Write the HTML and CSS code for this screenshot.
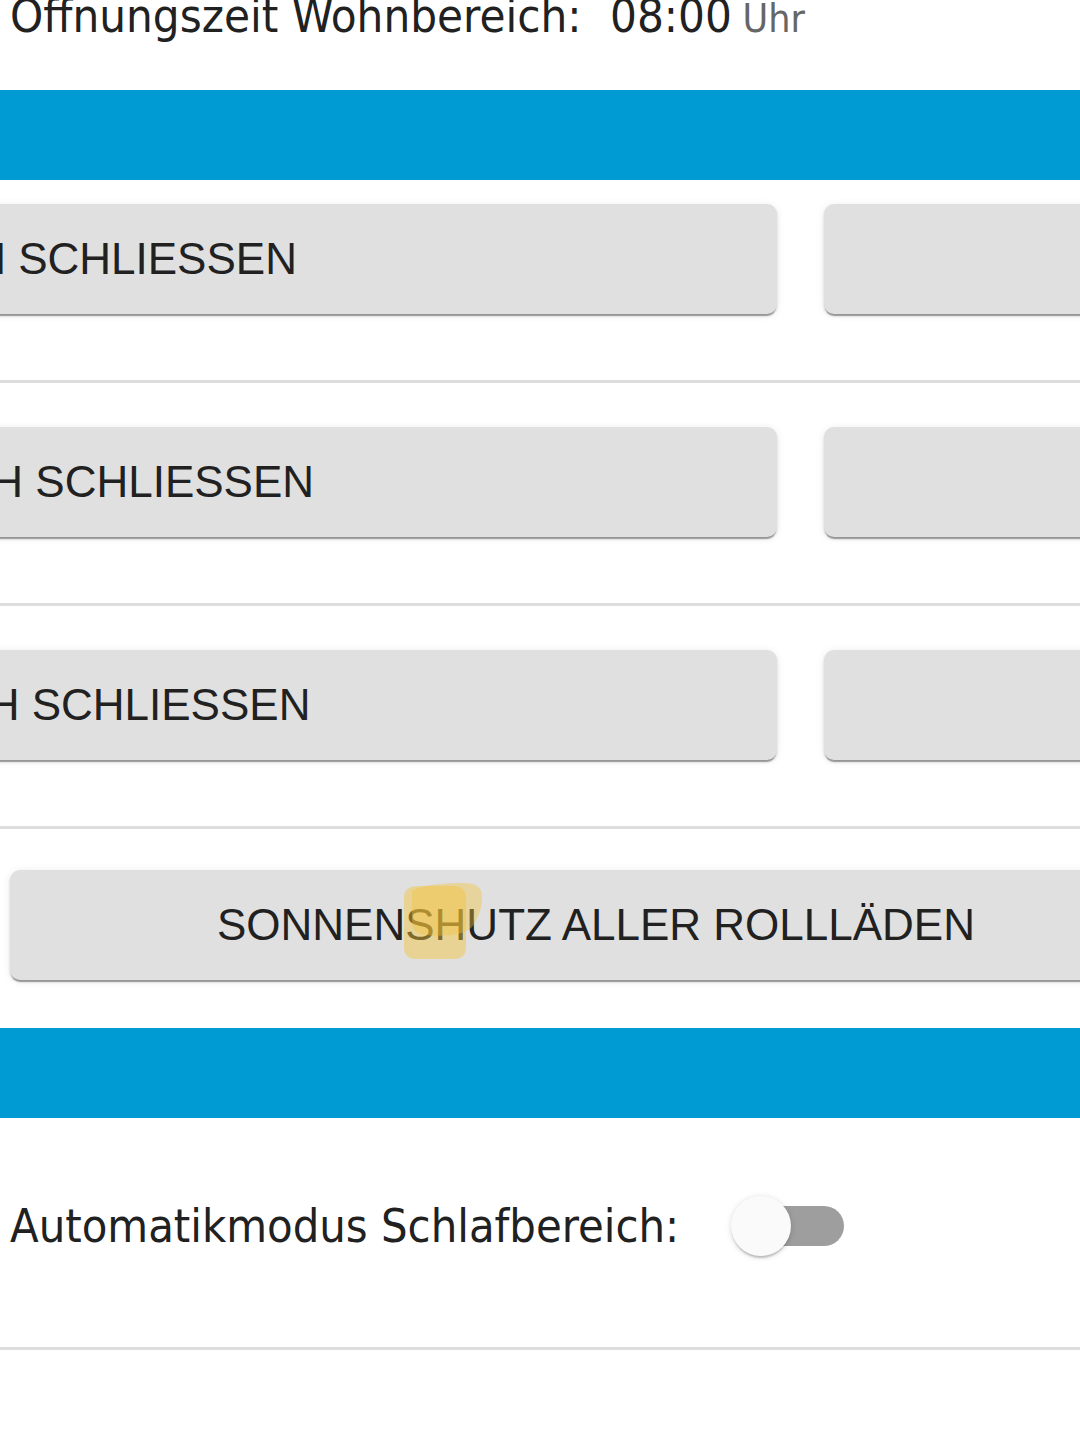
FILE: index.html
```html
<!DOCTYPE html>
<html lang="de">
<head>
  <meta charset="UTF-8">
  <title>Rollläden</title>
  <link rel="stylesheet" href="styles.css">
</head>
<body>

  <!-- Status -->
  <div class="status-line">
    <span class="label">Öffnungszeit Wohnbereich:</span>
    <span class="time">08:00</span>
    <span class="unit">Uhr</span>
  </div>

  <div class="section-bar"></div>

  <!-- Rollladen Aktionen -->
  <div class="action-row first">
    <button class="btn btn-main">WOHNBEREICH SCHLIESSEN</button>
    <button class="btn btn-side">WOHNBEREICH ÖFFNEN</button>
  </div>

  <div class="action-row">
    <button class="btn btn-main">SCHLAFBEREICH SCHLIESSEN</button>
    <button class="btn btn-side">SCHLAFBEREICH ÖFFNEN</button>
  </div>

  <div class="action-row">
    <button class="btn btn-main">KINDERBEREICH SCHLIESSEN</button>
    <button class="btn btn-side">KINDERBEREICH ÖFFNEN</button>
  </div>

  <div class="single-row">
    <button class="btn btn-full">SONNENSHUTZ ALLER ROLLLÄDEN</button>
    <svg class="marker" width="84" height="78" viewBox="0 0 84 78">
      <path d="M2 14 C2 6 8 3 18 3 L52 3 C60 3 64 8 64 16 L64 64 C64 72 60 76 52 76 L14 76 C6 76 2 72 2 64 Z" fill="#f2c438" opacity="0.45"/>
      <path d="M10 8 C18 2 40 0 62 0 C74 0 80 4 80 14 C80 26 76 36 70 44 C62 52 44 54 24 52 C14 52 10 46 10 36 Z" fill="#f2c438" opacity="0.4"/>
    </svg>
  </div>

  <div class="section-bar"></div>

  <!-- Automatik -->
  <div class="toggle-row">
    <span class="label">Automatikmodus Schlafbereich:</span>
    <span class="switch"></span>
  </div>

</body>
</html>
```

FILE: styles.css
```css
body {
  margin: 0;
  width: 1080px;
  overflow: hidden;
  background-color: #fff;
  color: #212121;
  font-family: "DejaVu Sans Condensed", "DejaVu Sans", sans-serif;
  font-stretch: semi-condensed;
}

.status-line {
  height: 90px;
  padding-left: 10px;
  white-space: nowrap;
}

.status-line .label,
.status-line .time {
  font-size: 47px;
  line-height: 46px;
  position: relative;
  top: -7px;
}

.status-line .time {
  margin-left: 24px;
}

.status-line .unit {
  font-size: 39px;
  color: #666;
  position: relative;
  top: -7px;
  margin-left: 6px;
}

.section-bar {
  height: 90px;
  background-color: #009bd2;
}

.action-row {
  display: flex;
  gap: 47px;
  margin-left: -809px;
  padding: 44px 0 66px;
  border-bottom: 3px solid #dddddd;
}

.action-row.first {
  padding-top: 24px;
}

.btn {
  height: 110px;
  border: none;
  border-radius: 10px;
  padding: 0;
  background-color: #e0e0e0;
  color: #212121;
  font-family: "Liberation Sans", Arial, sans-serif;
  font-size: 44px;
  white-space: nowrap;
  box-shadow: 0 3px 1px -1px rgba(0, 0, 0, 0.3), 0 2px 3px rgba(0, 0, 0, 0.14), 0 1px 8px rgba(0, 0, 0, 0.08);
  flex-shrink: 0;
}

.btn-main,
.btn-side {
  width: 1586px;
}

.single-row {
  position: relative;
  display: flex;
  padding: 41px 0 48px 10px;
}

.btn-full {
  width: 1172px;
}

.marker {
  position: absolute;
  left: 402px;
  top: 54px;
}

.toggle-row {
  display: flex;
  align-items: center;
  height: 232px;
  padding: 0 0 14px 10px;
  box-sizing: border-box;
  border-bottom: 3px solid #dddddd;
}

.toggle-row .label {
  font-size: 46.6px;
}

.switch {
  position: relative;
  width: 104px;
  height: 40px;
  margin-left: 61px;
  border-radius: 20px;
  background-color: #9e9e9e;
}

.switch::before {
  content: "";
  position: absolute;
  left: -9px;
  top: -10px;
  width: 60px;
  height: 60px;
  border-radius: 50%;
  background-color: #fafafa;
  box-shadow: 0 3px 2px -1px rgba(0, 0, 0, 0.2), 0 1px 6px rgba(0, 0, 0, 0.15);
}
```
